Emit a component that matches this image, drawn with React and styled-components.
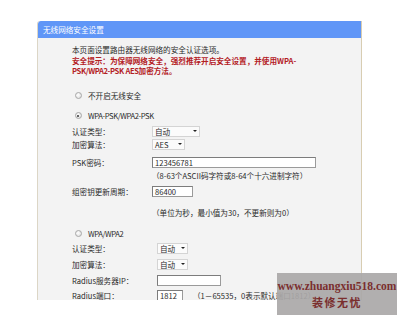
import React from "react";
import styled, { createGlobalStyle } from "styled-components";

const Global = createGlobalStyle`
  html, body { margin: 0; padding: 0; background: #fff; }
  body { font-family: "Noto Sans CJK SC", "Liberation Sans", sans-serif; }
`;

const Page = styled.div`
  position: relative;
  width: 400px;
  height: 321px;
  overflow: hidden;
  box-sizing: border-box;
  padding: 21px 0 0 37px;
  background: #fff;
`;

const Panel = styled.div`
  width: 325px;
  height: 279px;
  box-sizing: border-box;
  border-left: 1px solid #dcd6c6;
  border-right: 1px solid #d8cdb2;
  border-top-left-radius: 3px;
  background: #f3f3f3;
  overflow: hidden;
  font-size: 7.6px;
  color: #2a2a2a;
`;

const TitleBar = styled.div`
  height: 17px;
  line-height: 17px;
  background: #6096f7;
  color: #fff;
  padding-left: 5px;
  font-size: 7.6px;
  border-top-left-radius: 3px;
`;

const Body = styled.div`
  padding: 7px 0 0 34px;
`;

const Intro = styled.div`
  line-height: 10.5px;
`;

const Warn = styled.div`
  color: #b3201f;
  font-weight: bold;
`;

const Latin = styled.span`
  letter-spacing: -0.4px;
`;

const RadioRow = styled.div`
  display: flex;
  align-items: center;
  gap: 6.5px;
  height: 13px;
  padding-left: 2.5px;
  margin-top: ${(p) => p.$mt || 0}px;
`;

const Radio = styled.span`
  position: relative;
  width: 7px;
  height: 7px;
  box-sizing: border-box;
  border-radius: 50%;
  border: 1px solid #a8a8a8;
  background: radial-gradient(circle at 40% 40%, #ffffff, #d8d8d8);
  &::after {
    content: "";
    display: ${(p) => (p.$checked ? "block" : "none")};
    position: absolute;
    left: 1.5px;
    top: 1.5px;
    width: 2px;
    height: 2px;
    border-radius: 50%;
    background: #333;
  }
`;

const FormRow = styled.div`
  display: grid;
  grid-template-columns: ${(p) => p.$col}px auto;
  align-items: center;
  height: 13px;
  margin-top: ${(p) => p.$mt || 0}px;
`;

const Controls = styled.div`
  display: flex;
  align-items: center;
  gap: 10px;
`;

const Hint = styled.div`
  height: 13px;
  line-height: 13px;
  padding-left: ${(p) => p.$col}px;
  margin-top: ${(p) => p.$mt || 0}px;
  white-space: nowrap;
`;

const Select = styled.div`
  display: inline-flex;
  align-items: center;
  justify-content: space-between;
  box-sizing: border-box;
  width: ${(p) => p.$w}px;
  height: 11px;
  padding: 0 2px 0 2px;
  border: 1px solid #d4d4d4;
  background: #fbfbfb;
  line-height: 9px;
`;

const Arrow = styled.span`
  width: 0;
  height: 0;
  border-left: 2px solid transparent;
  border-right: 2px solid transparent;
  border-top: 2.5px solid #222;
`;

const Input = styled.div`
  box-sizing: border-box;
  width: ${(p) => p.$w}px;
  height: 11px;
  line-height: 9px;
  padding-left: 2px;
  border: 1px solid #9a9a9a;
  border-top-color: #7c7c7c;
  border-left-color: #7c7c7c;
  background: #fff;
  white-space: nowrap;
  overflow: hidden;
`;

const Watermark = styled.div`
  position: absolute;
  left: 277px;
  top: 273px;
  width: 120px;
  height: 42px;
  background: rgba(170, 168, 168, 0.92);
  color: #7a2e2e;
  display: flex;
  flex-direction: column;
  align-items: center;
  justify-content: center;
  gap: 2px;
`;

const WmUrl = styled.div`
  font-family: "Liberation Serif", serif;
  font-weight: bold;
  font-size: 11.5px;
  line-height: 14px;
`;

const WmName = styled.div`
  font-family: "Noto Sans CJK SC", sans-serif;
  font-weight: bold;
  font-size: 11px;
  line-height: 14px;
  letter-spacing: 1.5px;
`;

export default function App() {
  return (
    <>
      <Global />
      <Page>
        <Panel>
          <TitleBar>无线网络安全设置</TitleBar>
          <Body>
            <Intro>
              <div>本页面设置路由器无线网络的安全认证选项。</div>
              <Warn>
                安全提示：为保障网络安全，强烈推荐开启安全设置，并使用WPA-
                <br />
                <Latin>PSK/WPA2-PSK</Latin> <Latin>AES</Latin>加密方法。
              </Warn>
            </Intro>

            <RadioRow $mt={12}>
              <Radio />
              不开启无线安全
            </RadioRow>
            <RadioRow $mt={7.5}>
              <Radio $checked />
              <Latin>WPA-PSK/WPA2-PSK</Latin>
            </RadioRow>

            <FormRow $col={80} $mt={2.5}>
              <span>认证类型：</span>
              <Controls>
                <Select $w={48}>
                  自动<Arrow />
                </Select>
              </Controls>
            </FormRow>
            <FormRow $col={80}>
              <span>加密算法：</span>
              <Controls>
                <Select $w={33}>
                  AES<Arrow />
                </Select>
              </Controls>
            </FormRow>
            <FormRow $col={80} $mt={5}>
              <span>PSK密码：</span>
              <Controls>
                <Input $w={164}>123456781</Input>
              </Controls>
            </FormRow>
            <Hint $col={80}>（8-63个ASCII码字符或8-64个十六进制字符）</Hint>
            <FormRow $col={80} $mt={3}>
              <span>组密钥更新周期：</span>
              <Controls>
                <Input $w={41}>86400</Input>
              </Controls>
            </FormRow>
            <Hint $col={80} $mt={8}>（单位为秒，最小值为30，不更新则为0）</Hint>

            <RadioRow $mt={8}>
              <Radio />
              <Latin>WPA/WPA2</Latin>
            </RadioRow>
            <FormRow $col={85} $mt={2}>
              <span>认证类型：</span>
              <Controls>
                <Select $w={31}>
                  自动<Arrow />
                </Select>
              </Controls>
            </FormRow>
            <FormRow $col={85} $mt={3}>
              <span>加密算法：</span>
              <Controls>
                <Select $w={31}>
                  自动<Arrow />
                </Select>
              </Controls>
            </FormRow>
            <FormRow $col={85} $mt={3}>
              <span>Radius服务器IP：</span>
              <Controls>
                <Input $w={64} />
              </Controls>
            </FormRow>
            <FormRow $col={85} $mt={2}>
              <span>Radius端口：</span>
              <Controls>
                <Input $w={26}>1812</Input>
                <span>（1－65535，0表示默认端口1812）</span>
              </Controls>
            </FormRow>
          </Body>
        </Panel>
        <Watermark>
          <WmUrl>www.zhuangxiu518.com</WmUrl>
          <WmName>装修无忧</WmName>
        </Watermark>
      </Page>
    </>
  );
}
